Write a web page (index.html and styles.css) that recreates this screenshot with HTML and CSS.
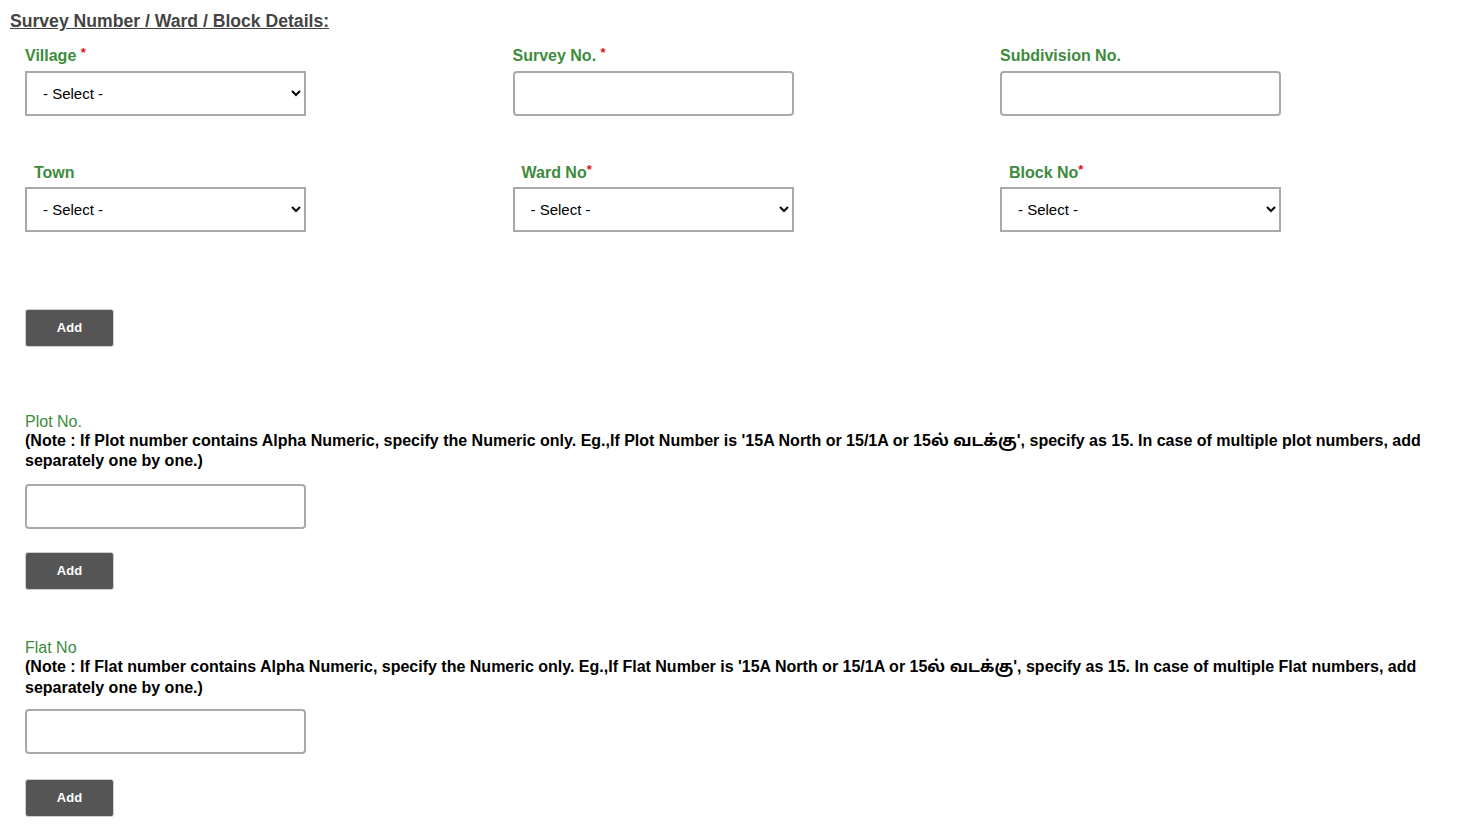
FILE: index.html
```html
<!DOCTYPE html>
<html lang="en">
<head>
<meta charset="utf-8">
<title>Survey Number / Ward / Block Details</title>
<link rel="stylesheet" href="styles.css">
</head>
<body>
<div class="page">
  <h3 class="heading">Survey Number / Ward / Block Details:</h3>

  <div class="fields">
    <div class="field">
      <label class="field-label">Village <span class="req">*</span></label>
      <select class="ctrl-select"><option>- Select -</option></select>
    </div>
    <div class="field">
      <label class="field-label">Survey No. <span class="req">*</span></label>
      <input class="ctrl-input" type="text">
    </div>
    <div class="field">
      <label class="field-label">Subdivision No.</label>
      <input class="ctrl-input" type="text">
    </div>

    <div class="field">
      <label class="field-label indent">Town</label>
      <select class="ctrl-select"><option>- Select -</option></select>
    </div>
    <div class="field">
      <label class="field-label indent">Ward No<span class="req">*</span></label>
      <select class="ctrl-select"><option>- Select -</option></select>
    </div>
    <div class="field">
      <label class="field-label indent">Block No<span class="req">*</span></label>
      <select class="ctrl-select"><option>- Select -</option></select>
    </div>
  </div>

  <div class="block first-add">
    <button class="btn-add" type="button">Add</button>
  </div>

  <div class="block plot">
    <div class="sub-label">Plot No.</div>
    <div class="note">(Note : If Plot number contains Alpha Numeric, specify the Numeric only. Eg.,If Plot Number is '15A North or 15/1A or 15ல் வடக்கு', specify as 15. In case of multiple plot numbers, add separately one by one.)</div>
    <input class="ctrl-input plot-input" type="text">
    <button class="btn-add plot-btn" type="button">Add</button>
  </div>

  <div class="block flat">
    <div class="sub-label">Flat No</div>
    <div class="note">(Note : If Flat number contains Alpha Numeric, specify the Numeric only. Eg.,If Flat Number is '15A North or 15/1A or 15ல் வடக்கு', specify as 15. In case of multiple Flat numbers, add separately one by one.)</div>
    <input class="ctrl-input flat-input" type="text">
    <button class="btn-add flat-btn" type="button">Add</button>
  </div>
</div>
</body>
</html>
```

FILE: styles.css
```css
html, body {
  margin: 0;
  padding: 0;
  background: #ffffff;
}

body {
  font-family: "Liberation Sans", Arial, "Noto Sans Tamil", "Noto Sans", sans-serif;
  color: #000;
}

.page {
  padding: 10.9px 10px 0 10px;
}

.heading {
  margin: 0;
  font-size: 17.6px;
  line-height: 20px;
  font-weight: bold;
  color: #444444;
  text-decoration: underline;
}

.fields {
  display: grid;
  grid-template-columns: 487.5px 487.5px 1fr;
  row-gap: 47.5px;
  margin: 15.1px 0 0 15px;
}

.field {
  display: flex;
  flex-direction: column;
  align-items: flex-start;
}

.field-label {
  font-size: 16px;
  line-height: 19px;
  font-weight: bold;
  color: #3d8b3d;
  margin-bottom: 6px;
}

.field-label.indent {
  padding-left: 9px;
  margin-bottom: 4.5px;
}

.req {
  color: #e01010;
  font-size: 13px;
  vertical-align: top;
  line-height: 14px;
}

.ctrl-select {
  width: 281px;
  height: 45px;
  box-sizing: border-box;
  border: 2px solid #a9a9a9;
  border-radius: 0;
  background: #ffffff;
  font-family: "Liberation Sans", Arial, sans-serif;
  font-size: 15px;
  color: #000;
  padding: 0 6px 0 12px;
  outline: none;
}

.ctrl-input {
  display: block;
  width: 281px;
  height: 45px;
  box-sizing: border-box;
  border: 2px solid #a9a9a9;
  border-radius: 4px;
  background: #ffffff;
  font-family: "Liberation Sans", Arial, sans-serif;
  font-size: 15px;
  padding: 0 10px;
  margin: 0;
  outline: none;
}

.block {
  margin-left: 15px;
}

.first-add {
  margin-top: 77px;
}

.btn-add {
  display: block;
  height: 38px;
  width: 89px;
  box-sizing: border-box;
  margin: 0;
  padding: 0;
  background: #555555;
  color: #ffffff;
  border: 1px solid #cfcfcf;
  border-radius: 3px;
  font-family: "Liberation Sans", Arial, sans-serif;
  font-size: 13px;
  font-weight: bold;
  cursor: pointer;
}

.plot {
  margin-top: 65px;
}

.flat {
  margin-top: 48.3px;
}

.sub-label {
  font-size: 16px;
  line-height: 19px;
  color: #3d8b3d;
}

.note {
  width: 1420px;
  font-size: 16px;
  line-height: 20.5px;
  font-weight: bold;
  color: #000;
}

.plot-input {
  margin-top: 12px;
}

.flat-input {
  margin-top: 11px;
}

.plot-btn {
  margin-top: 23px;
}

.flat-btn {
  margin-top: 24.5px;
}
```
